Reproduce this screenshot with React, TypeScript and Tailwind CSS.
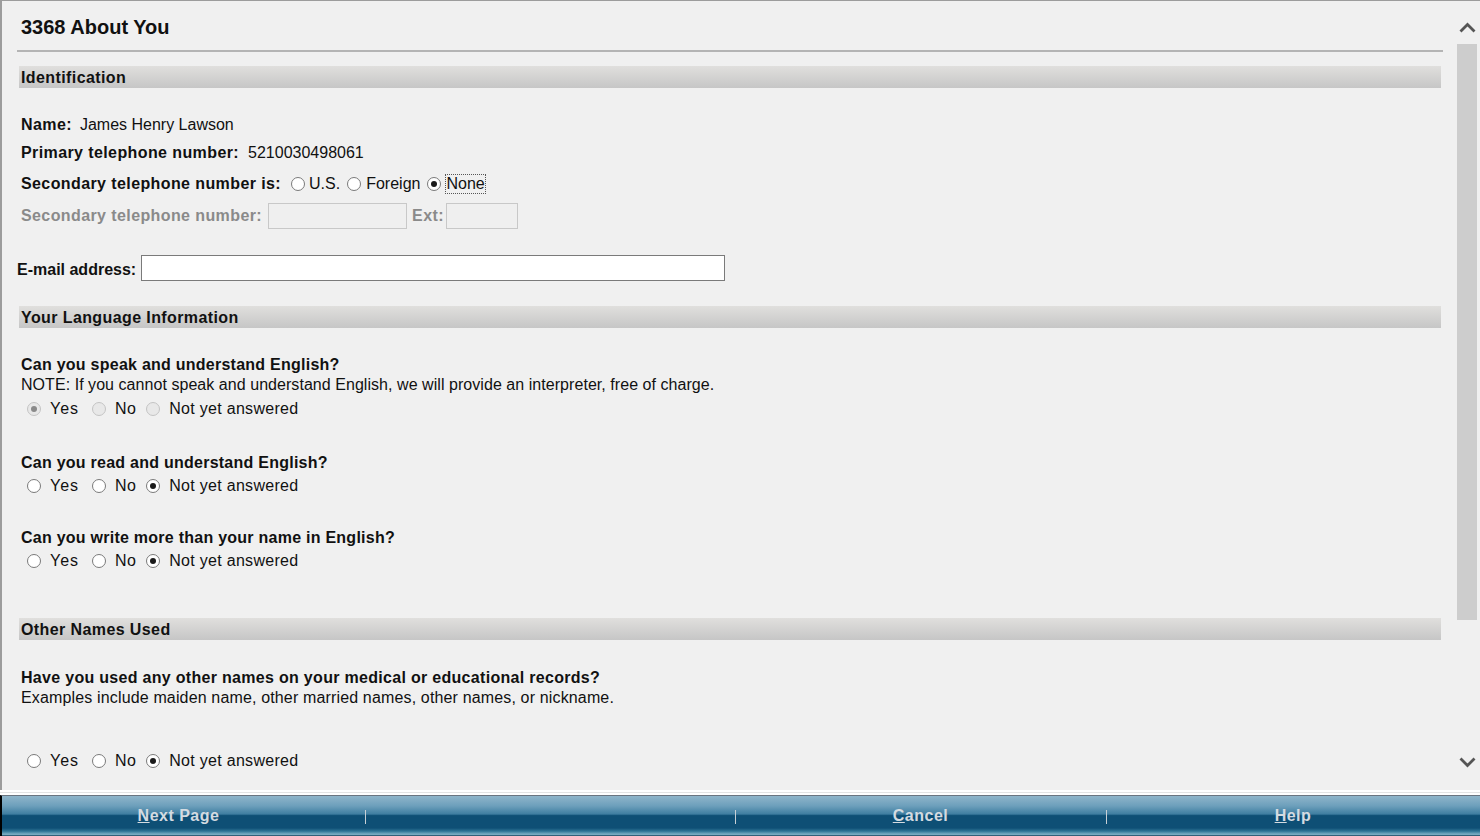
import React from 'react';

const font = { fontFamily: '"Liberation Sans", Arial, sans-serif' };

function Radio({ checked, disabled }: { checked?: boolean; disabled?: boolean }) {
    return (
        <span
            className={`inline-flex w-[14px] h-[14px] rounded-full border items-center justify-center shrink-0 ${
                disabled ? 'border-[#c4c4c4] bg-[#e8e8e8]' : 'border-[#7a7a7a] bg-white'
            }`}
        >
            {checked && (
                <span className={`w-[6px] h-[6px] rounded-full ${disabled ? 'bg-[#8a8a8a]' : 'bg-[#1a1a1a]'}`} />
            )}
        </span>
    );
}

function YesNo({ value, disabled }: { value: 'yes' | 'none'; disabled?: boolean }) {
    const items = [
        { key: 'yes', label: 'Yes', cls: 'tracking-[1px]', wrap: 'mr-[13px]' },
        { key: 'no', label: 'No', cls: '', wrap: 'mr-[10px]' },
        { key: 'none', label: 'Not yet answered', cls: '', wrap: '' },
    ];
    return (
        <div className="flex items-center pl-[6px] h-[20px] text-[16px] tracking-[0.3px] text-[#111]">
            {items.map((item) => (
                <span key={item.key} className={`flex items-center gap-[9px] ${item.wrap}`}>
                    <Radio checked={value === item.key} disabled={disabled} />
                    <span className={item.cls}>{item.label}</span>
                </span>
            ))}
        </div>
    );
}

function SectionBar({ title, className }: { title: string; className?: string }) {
    return (
        <div
            className={`ml-[2px] mr-[2px] h-[22px] flex items-center pl-[2px] pt-[2px] text-[16px] font-bold tracking-[0.4px] text-[#111] bg-[linear-gradient(to_bottom,#e0dfdd,#c6c6c6)] ${className}`}
        >
            {title}
        </div>
    );
}

function ChevronUp() {
    return (
        <svg width="17" height="11" viewBox="0 0 17 11">
            <path d="M1.5 9.5 L8.5 2.5 L15.5 9.5" fill="none" stroke="#555" strokeWidth="2.8" />
        </svg>
    );
}

function ChevronDown() {
    return (
        <svg width="17" height="11" viewBox="0 0 17 11">
            <path d="M1.5 1.5 L8.5 8.5 L15.5 1.5" fill="none" stroke="#555" strokeWidth="2.8" />
        </svg>
    );
}

export default function App() {
    return (
        <div className="w-[1480px] h-[836px] overflow-hidden bg-[#f0f0f0] flex flex-col text-[#111]" style={font}>
            {/* Main window */}
            <div className="h-[790px] flex border-t border-l-2 border-[#9c9c9c]">
                <div className="flex-1 pl-[15px] flex flex-col">
                    {/* Title */}
                    <div className="mt-[11px] h-[30px] flex items-center pl-[4px] text-[20px] font-bold">3368 About You</div>
                    <div className="mt-[8px] h-[2px] bg-[#b4b4b4] mr-[14px]" />

                    {/* Identification */}
                    <SectionBar title="Identification" className="mt-[14px] mr-[16px]" />
                    <div className="pl-[4px] pt-[1px] text-[16px]">
                        <div className="mt-[22px] h-[28px] flex items-center">
                            <span className="font-bold tracking-[0.4px]">Name:</span>
                            <span className="ml-[8px]">James Henry Lawson</span>
                        </div>
                        <div className="h-[28px] flex items-center">
                            <span className="font-bold tracking-[0.4px]">Primary telephone number:</span>
                            <span className="ml-[9px]">5210030498061</span>
                        </div>
                        <div className="mt-[3px] h-[28px] flex items-center">
                            <span className="font-bold tracking-[0.4px]">Secondary telephone number is:</span>
                            <span className="ml-[10px] flex items-center gap-[4px]">
                                <Radio />
                                <span>U.S.</span>
                            </span>
                            <span className="ml-[7px] flex items-center gap-[5px]">
                                <Radio />
                                <span>Foreign</span>
                            </span>
                            <span className="ml-[7px] flex items-center gap-[4px]">
                                <Radio checked />
                                <span className="border border-dotted border-[#555] leading-[18px]">None</span>
                            </span>
                        </div>
                        <div className="mt-[5px] h-[26px] flex items-center text-[#8a8a8a]">
                            <span className="font-bold tracking-[0.4px]">Secondary telephone number:</span>
                            <span className="ml-[6px] w-[139px] h-[26px] border border-[#c8c8c8] bg-[#efefef]" />
                            <span className="ml-[5px] font-bold tracking-[0.4px]">Ext:</span>
                            <span className="ml-[2px] w-[72px] h-[26px] border border-[#c8c8c8] bg-[#efefef]" />
                        </div>
                    </div>
                    <div className="mt-[26px] h-[26px] flex items-center text-[16px]">
                        <span className="font-bold pt-[3px]">E-mail address:</span>
                        <span className="ml-[5px] w-[584px] h-[26px] border border-[#7a7a7a] bg-white" />
                    </div>

                    {/* Language */}
                    <SectionBar title="Your Language Information" className="mt-[25px] mr-[16px]" />
                    <div className="pl-[4px] pt-[1px] text-[16px]">
                        <div className="mt-[26px] h-[20px] flex items-center font-bold tracking-[0.25px]">
                            Can you speak and understand English?
                        </div>
                        <div className="h-[20px] flex items-center tracking-[0.05px]">
                            NOTE: If you cannot speak and understand English, we will provide an interpreter, free of charge.
                        </div>
                        <div className="mt-[4px]">
                            <YesNo value="yes" disabled />
                        </div>

                        <div className="mt-[34px] h-[20px] flex items-center font-bold tracking-[0.25px]">
                            Can you read and understand English?
                        </div>
                        <div className="mt-[3px]">
                            <YesNo value="none" />
                        </div>

                        <div className="mt-[32px] h-[20px] flex items-center font-bold tracking-[0.25px]">
                            Can you write more than your name in English?
                        </div>
                        <div className="mt-[3px]">
                            <YesNo value="none" />
                        </div>
                    </div>

                    {/* Other names */}
                    <SectionBar title="Other Names Used" className="mt-[47px] mr-[16px]" />
                    <div className="pl-[4px] pt-[1px] text-[16px]">
                        <div className="mt-[27px] h-[20px] flex items-center font-bold tracking-[0.3px]">
                            Have you used any other names on your medical or educational records?
                        </div>
                        <div className="h-[20px] flex items-center tracking-[0.15px]">
                            Examples include maiden name, other married names, other names, or nickname.
                        </div>
                        <div className="mt-[43px]">
                            <YesNo value="none" />
                        </div>
                    </div>
                </div>

                {/* Scrollbar */}
                <div className="w-[20px] mr-[3px] flex flex-col items-center bg-[#f0f0f0]">
                    <div className="h-[43px] flex items-center justify-center pt-[10px]">
                        <ChevronUp />
                    </div>
                    <div className="w-[20px] h-[576px] bg-[#cdcdcd]" />
                    <div className="flex-1" />
                    <div className="h-[33px] flex items-start justify-center">
                        <ChevronDown />
                    </div>
                </div>
            </div>

            {/* Separator lines */}
            <div className="h-[5px] border-t-2 border-white bg-[#e4e4e4] border-b-2 border-b-white" />

            {/* Bottom bar */}
            <div className="h-[41px] flex items-center border-t border-[#6b7580] border-l-2 border-l-black bg-[linear-gradient(to_bottom,#8fb5ca_0%,#6c9fbb_25%,#3f7ea1_45%,#0e4f75_49%,#0e4f75_80%,#2f7596_88%,#7fb1c6_96%,#0c3c58_100%)] text-[16px] font-bold text-[#d4dbe1] tracking-[0.5px]">
                <div className="w-[363px] pr-[10px] h-full flex items-center justify-center">
                    <span>
                        <span className="underline">N</span>ext Page
                    </span>
                </div>
                <div className="w-[370px] h-full relative">
                    <span className="absolute left-0 top-[14px] w-[1px] h-[14px] bg-[#c8d0d6]" />
                </div>
                <div className="w-[371px] h-full relative flex items-center justify-center">
                    <span className="absolute left-0 top-[14px] w-[1px] h-[14px] bg-[#c8d0d6]" />
                    <span>
                        <span className="underline">C</span>ancel
                    </span>
                </div>
                <div className="flex-1 h-full relative flex items-center justify-center">
                    <span className="absolute left-0 top-[14px] w-[1px] h-[14px] bg-[#c8d0d6]" />
                    <span>
                        <span className="underline">H</span>elp
                    </span>
                </div>
            </div>
        </div>
    );
}
